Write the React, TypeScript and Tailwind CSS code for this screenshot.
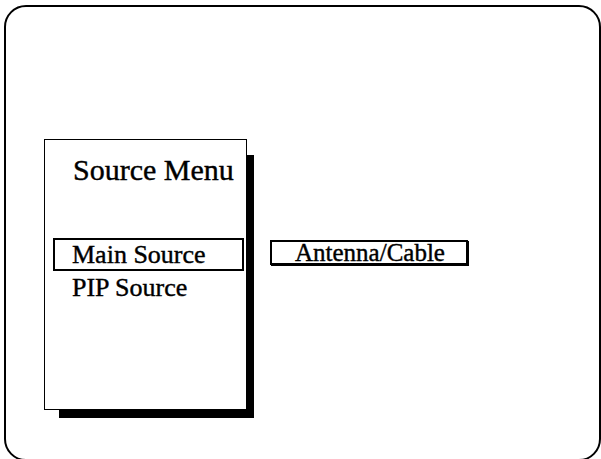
export default function App() {
  return (
    <div
      className="h-[459px] w-[601px] overflow-hidden bg-white text-black [-webkit-text-stroke:0.4px_black]"
      style={{ fontFamily: '"Liberation Serif", "Times New Roman", serif' }}
    >
      <div className="ml-[4px] mt-[5px] h-[456px] w-[597px] rounded-[22px] border-2 border-black">
        <div className="flex items-start gap-[23px] pl-[38px] pt-[132px]">
          {/* source menu panel */}
          <div className="h-[271px] w-[203px] border border-black bg-white shadow-[11px_12px_0_-4px_#000]">
            <div className="pl-[28px] pt-[15px] text-[30px] leading-none">Source Menu</div>
            <div className="ml-[8px] mt-[53px] h-[33px] w-[191px] border-2 border-black pl-[17px] pt-[2px] text-[26px] leading-none">
              Main Source
            </div>
            <div className="ml-[27px] mt-[4px] text-[26px] leading-none">PIP Source</div>
          </div>
          {/* current selection */}
          <div className="mt-[101px] h-[25px] w-[198px] border-2 border-black pl-[23px] text-[25px] leading-[21px] shadow-[1px_1px_0_0_#000]">
            Antenna/Cable
          </div>
        </div>
      </div>
    </div>
  );
}
